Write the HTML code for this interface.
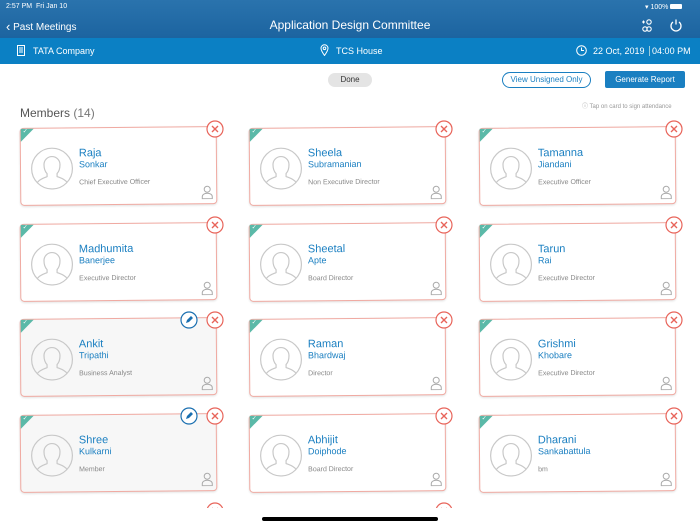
<!DOCTYPE html>
<html><head><meta charset="utf-8"><style>
*{margin:0;padding:0;box-sizing:border-box}
body{width:700px;height:525px;overflow:hidden;background:#fff;font-family:"Liberation Sans",sans-serif;position:relative}
.top{position:absolute;left:0;top:0;width:700px;height:38px;background:linear-gradient(#2a73ad,#1c64a0)}
.sub{position:absolute;left:0;top:38px;width:700px;height:26px;background:#0b80c4;color:#fff;font-size:9px}
.t{position:absolute;color:#fff}
.card{position:absolute;width:197px;height:78px;border:1px solid #f0aaa2;border-radius:4px;background:#fff;box-shadow:0 1px 2px rgba(0,0,0,.12);transform:rotate(-0.5deg)}
.card.g{background:#f7f7f7}
.tri{position:absolute;left:0;top:0;width:0;height:0;border-top:13px solid #5bb9a8;border-right:13px solid transparent}
.ck{position:absolute;left:2px;top:0px;color:#fff;font-size:6px;line-height:7px}
.av{position:absolute;left:10px;top:19px;width:42px;height:42px}
.nm{position:absolute;left:58px;top:19px;color:#1a7fc1;font-size:11px}
.sn{position:absolute;left:58px;top:31px;color:#1a7fc1;font-size:9px}
.rl{position:absolute;left:58px;top:51px;color:#888;font-size:7px}
.pi{position:absolute;left:180px;top:58px;width:12px;height:14px}
.x{position:absolute;width:18px;height:18px}
</style></head><body>
<div class="top"></div>
<div class="t" style="left:6px;top:3px;font-size:7px">2:57 PM&nbsp;&nbsp;Fri Jan 10</div>
<div class="t" style="left:645px;top:3px;font-size:7px">▾ 100% <span style="display:inline-block;width:12px;height:5px;background:#fff;border-radius:1px"></span></div>
<div class="t" style="left:6px;top:18px;font-size:10px"><span style="font-size:13px;position:relative;top:1px">‹</span> Past Meetings</div>
<div class="t" style="left:0;width:700px;text-align:center;top:18px;font-size:12px">Application Design Committee</div>
<svg style="position:absolute;left:640px;top:18px" width="14" height="14" viewBox="0 0 14 14" fill="none" stroke="#fff" stroke-width="1.1"><circle cx="9" cy="4" r="2.2"/><circle cx="5" cy="11" r="2.2"/><circle cx="9" cy="11" r="2.2"/><path d="M2 4h3M3.5 2.5v3"/></svg>
<svg style="position:absolute;left:669px;top:18px" width="14" height="14" viewBox="0 0 14 14" fill="none" stroke="#fff" stroke-width="1.3"><path d="M4 4a5 5 0 1 0 6 0M7 1.5v5"/></svg>
<div class="sub">
<svg style="position:absolute;left:17px;top:7px" width="8" height="11" viewBox="0 0 8 11" fill="none" stroke="#fff"><rect x=".5" y=".5" width="7" height="10"/><path d="M2 3h4M2 5h4M2 7h4"/></svg>
<div class="t" style="left:33px;top:8px">TATA Company</div>
<svg style="position:absolute;left:320px;top:6px" width="9" height="12" viewBox="0 0 9 12" fill="none" stroke="#fff"><path d="M4.5 11.5C2 8 1 6 1 4.3a3.5 3.5 0 0 1 7 0C8 6 7 8 4.5 11.5z"/><circle cx="4.5" cy="4.3" r="1.3"/></svg>
<div class="t" style="left:336px;top:8px">TCS House</div>
<svg style="position:absolute;left:576px;top:7px" width="11" height="11" viewBox="0 0 11 11" fill="none" stroke="#fff"><circle cx="5.5" cy="5.5" r="4.8"/><path d="M5.5 2.5v3h2.5"/></svg>
<div class="t" style="left:593px;top:8px">22 Oct, 2019 <span style="border-left:1px solid #9cd;margin:0 2px"></span> 04:00 PM</div>
</div>
<div style="position:absolute;left:328px;top:73px;width:44px;height:14px;border-radius:7px;background:#e4e4e4;font-size:8px;color:#333;text-align:center;line-height:14px">Done</div>
<div style="position:absolute;left:502px;top:72px;width:89px;height:16px;border-radius:8px;border:1px solid #1a7fc1;font-size:8px;color:#1a7fc1;text-align:center;line-height:14px">View Unsigned Only</div>
<div style="position:absolute;left:605px;top:71px;width:80px;height:17px;border-radius:2px;background:#1a7fc1;font-size:8px;color:#fff;text-align:center;line-height:17px">Generate Report</div>
<div style="position:absolute;left:582px;top:101px;font-size:6px;color:#999">ⓘ Tap on card to sign attendance</div>
<div style="position:absolute;left:20px;top:106px;font-size:12px;color:#555">Members <span style="color:#777">(14)</span></div>
<div id="c"></div>
<div style="position:absolute;left:262px;top:517px;width:176px;height:4px;border-radius:2px;background:#000"></div>
<script>
var d=[["Raja","Sonkar","Chief Executive Officer"],["Sheela","Subramanian","Non Executive Director"],["Tamanna","Jiandani","Executive Officer"],["Madhumita","Banerjee","Executive Director"],["Sheetal","Apte","Board Director"],["Tarun","Rai","Executive Director"],["Ankit","Tripathi","Business Analyst",1],["Raman","Bhardwaj","Director"],["Grishmi","Khobare","Executive Director"],["Shree","Kulkarni","Member",1],["Abhijit","Doiphode","Board Director"],["Dharani","Sankabattula","bm"]];
var xs=[20,249,479],h="";
var av='<svg class="av" viewBox="0 0 42 42" fill="none" stroke="#c8c8c8" stroke-width="1.2"><circle cx="21" cy="21" r="20.4"/><path d="M6 35c3-4 8-5 10-6v-3c-2-2-3-5-3-9 0-5 4-8 8-8s8 3 8 8c0 4-1 7-3 9v3c2 1 7 2 10 6"/></svg>';
var pi='<svg class="pi" viewBox="0 0 12 14" fill="none" stroke="#aaa"><circle cx="6" cy="4" r="3"/><path d="M1 13.5v-2c0-2 2-3.5 5-3.5s5 1.5 5 3.5v2z"/></svg>';
var xi='<svg viewBox="0 0 18 18" width="18" height="18"><circle cx="9" cy="9" r="8" fill="#fff" stroke="#e8645a" stroke-width="1.2"/><path d="M6 6l6 6M12 6l-6 6" stroke="#e8645a" stroke-width="1.4"/></svg>';
var ei='<svg viewBox="0 0 18 18" width="18" height="18"><circle cx="9" cy="9" r="8" fill="#fff" stroke="#1a6fb0" stroke-width="1.2"/><path d="M6 12l1-3 4-4 2 2-4 4z" fill="#1a6fb0"/></svg>';
for(var i=0;i<15;i++){var x=xs[i%3],y=127+Math.floor(i/3)*95.5;
if(i<12){var c=d[i];h+='<div class="card'+(c[3]?' g':'')+'" style="left:'+x+'px;top:'+y+'px"><div class="tri"></div><div class="ck">✓</div>'+av+'<div class="nm">'+c[0]+'</div><div class="sn">'+c[1]+'</div><div class="rl">'+c[2]+'</div>'+pi+'</div>';
if(c[3])h+='<div class="x" style="left:'+(x+160)+'px;top:'+(y-7)+'px">'+ei+'</div>';}
else h+='<div style="position:absolute;left:'+(x+20)+'px;top:'+(y-1)+'px;width:175px;height:1px;background:linear-gradient(90deg,#fff,#f0aaa2)"></div>';
if(i<14)h+='<div class="x" style="left:'+(x+186)+'px;top:'+(y-7)+'px">'+xi+'</div>';}
h+='<div style="position:absolute;left:0;top:508px;width:700px;height:17px;background:#fff"></div>';
document.getElementById("c").innerHTML=h;
</script>
</body></html>
